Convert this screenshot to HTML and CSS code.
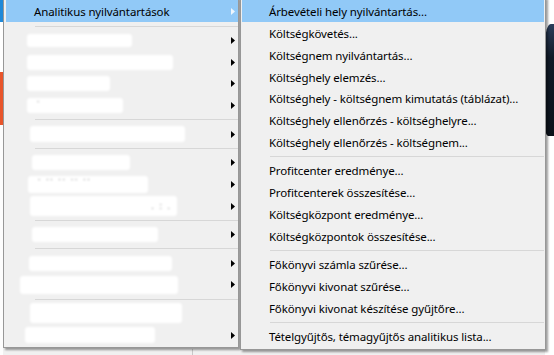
FILE: index.html
```html
<!DOCTYPE html>
<html lang="hu">
<head>
<meta charset="utf-8">
<title>Menü</title>
<link rel="stylesheet" href="styles.css">
</head>
<body>
<div class="desktop">
  <div class="edge-left">
    <div class="blue"></div>
    <div class="gap"></div>
    <div class="orange"></div>
    <div class="rest"></div>
  </div>
  <div class="center">
    <div class="bottom-strip"><span class="vline"></span></div>
  </div>
  <div class="edge-right">
    <div class="top"></div>
    <div class="logo"></div>
    <div class="rest"></div>
  </div>
</div>

<div class="menu menu-main">
  <div class="item active"><span class="label">Analitikus nyilvántartások</span><svg class="arrow" width="4" height="7" viewBox="0 0 4 7"><path d="M0 0L4 3.5L0 7z"/></svg></div>
  <div class="sep"></div>
  <div class="item"><span class="patch p1"></span><svg class="arrow" width="4" height="7" viewBox="0 0 4 7"><path d="M0 0L4 3.5L0 7z"/></svg></div>
  <div class="item"><span class="patch p2"></span><svg class="arrow" width="4" height="7" viewBox="0 0 4 7"><path d="M0 0L4 3.5L0 7z"/></svg></div>
  <div class="item"><span class="patch p3"></span><svg class="arrow" width="4" height="7" viewBox="0 0 4 7"><path d="M0 0L4 3.5L0 7z"/></svg></div>
  <div class="item"><span class="patch p4"><span class="frag">·</span></span><svg class="arrow" width="4" height="7" viewBox="0 0 4 7"><path d="M0 0L4 3.5L0 7z"/></svg></div>
  <div class="sep"></div>
  <div class="item"><span class="patch p5"></span><svg class="arrow" width="4" height="7" viewBox="0 0 4 7"><path d="M0 0L4 3.5L0 7z"/></svg></div>
  <div class="sep"></div>
  <div class="item"><span class="patch p6"></span><svg class="arrow" width="4" height="7" viewBox="0 0 4 7"><path d="M0 0L4 3.5L0 7z"/></svg></div>
  <div class="item"><span class="patch p7"><span class="frag">· ·· ·· ·· ··</span></span><svg class="arrow" width="4" height="7" viewBox="0 0 4 7"><path d="M0 0L4 3.5L0 7z"/></svg></div>
  <div class="item"><span class="patch p8"><span class="frag frag-right">. : .</span></span><svg class="arrow" width="4" height="7" viewBox="0 0 4 7"><path d="M0 0L4 3.5L0 7z"/></svg></div>
  <div class="sep"></div>
  <div class="item"><span class="patch p9"></span><svg class="arrow" width="4" height="7" viewBox="0 0 4 7"><path d="M0 0L4 3.5L0 7z"/></svg></div>
  <div class="sep"></div>
  <div class="item"><span class="patch p10"></span><svg class="arrow" width="4" height="7" viewBox="0 0 4 7"><path d="M0 0L4 3.5L0 7z"/></svg></div>
  <div class="item"><span class="patch p11"></span><svg class="arrow" width="4" height="7" viewBox="0 0 4 7"><path d="M0 0L4 3.5L0 7z"/></svg></div>
  <div class="sep"></div>
  <div class="item"><span class="patch p12"></span></div>
  <div class="item"><span class="patch p13"></span><svg class="arrow" width="4" height="7" viewBox="0 0 4 7"><path d="M0 0L4 3.5L0 7z"/></svg></div>
</div>

<div class="menu menu-sub">
  <div class="item active">Árbevételi hely nyilvántartás...</div>
  <div class="item">Költségkövetés...</div>
  <div class="item">Költségnem nyilvántartás...</div>
  <div class="item">Költséghely elemzés...</div>
  <div class="item">Költséghely - költségnem kimutatás (táblázat)...</div>
  <div class="item">Költséghely ellenőrzés - költséghelyre...</div>
  <div class="item">Költséghely ellenőrzés - költségnem...</div>
  <div class="sep"></div>
  <div class="item">Profitcenter eredménye...</div>
  <div class="item">Profitcenterek összesítése...</div>
  <div class="item">Költségközpont eredménye...</div>
  <div class="item">Költségközpontok összesítése...</div>
  <div class="sep"></div>
  <div class="item">Főkönyvi számla szűrése...</div>
  <div class="item">Főkönyvi kivonat szűrése...</div>
  <div class="item">Főkönyvi kivonat készítése gyűjtőre...</div>
  <div class="sep"></div>
  <div class="item">Tételgyűjtős, témagyűjtős analitikus lista...</div>
</div>
</body>
</html>
```

FILE: styles.css
```css
html, body {
  margin: 0;
  width: 554px;
  height: 355px;
  overflow: hidden;
}

body {
  position: relative;
  background: #f1f1f1;
  font-family: "Noto Sans", "Open Sans", sans-serif;
  font-size: 11.5px;
  letter-spacing: -0.12px;
  color: #000;
}

/* underlying application, mostly hidden */
.desktop {
  display: flex;
  height: 355px;
}

.edge-left {
  width: 3px;
  flex: none;
  display: flex;
  flex-direction: column;
}
.edge-left .blue { height: 22px; background: #2089d8; }
.edge-left .gap { height: 50px; background: #ffffff; }
.edge-left .orange { height: 53px; background: #e8552b; }
.edge-left .rest { flex: 1; background: #fdfdfd; }

.center {
  flex: 1;
  display: flex;
  flex-direction: column;
  justify-content: flex-end;
}
.bottom-strip {
  height: 6px;
  background: #f0f0f0;
  display: flex;
  padding-left: 189px;
}
.vline {
  width: 1px;
  background: #c8c8c8;
}

.edge-right {
  width: 9px;
  flex: none;
  display: flex;
  flex-direction: column;
  background: #ffffff;
}
.edge-right .top { height: 24px; flex: none; }
.edge-right .logo {
  height: 112px;
  flex: none;
  background: linear-gradient(180deg, #2b3d5a 0%, #101a28 30%, #0b1119 100%);
  border-top-left-radius: 6px 18px;
  border-bottom-left-radius: 3px 10px;
}
.edge-right .rest { flex: 1; }

/* popup menus */
.menu {
  position: absolute;
  top: -3px;
  background: #f0f0f0;
  border: 1px solid #979797;
  box-shadow: 2px 2px 2px rgba(0, 0, 0, 0.38);
}

.menu-main {
  left: 3px;
  width: 232px;
  padding: 2px 0 2px 2px;
}

.menu-sub {
  left: 240px;
  width: 302px;
  padding: 2px 1px;
}

.item {
  box-sizing: border-box;
  height: 21.75px;
  display: flex;
  align-items: center;
  white-space: nowrap;
  padding-top: 2px;
}

.menu-main .item {
  padding-left: 28px;
  padding-right: 3px;
}

.menu-sub .item {
  padding-left: 27px;
}

.item.active {
  background: #91c9f7;
}

.arrow {
  margin-left: auto;
  fill: #000;
  flex: none;
}
.item.active .arrow {
  fill: #eef6fd;
}

.sep {
  height: 1px;
  background: #d7d7d7;
  margin: 3.75px 0 2px 0;
}
.menu-main .sep { margin-left: 29px; }
.menu-sub .sep { margin-left: 28px; }

/* redacted entries of the main menu */
.patch {
  position: relative;
  display: block;
  background: #ffffff;
  border-radius: 3px;
  filter: blur(1px);
  flex: none;
}
.frag {
  position: absolute;
  left: 10px;
  top: 0;
  font-size: 8px;
  line-height: 8px;
  color: #777;
  letter-spacing: 2px;
}
.frag-right {
  left: auto;
  right: 5px;
  top: 6px;
}
.p1 { margin-left: -7px; width: 105px; height: 13px; }
.p2 { margin-left: -7px; width: 146px; height: 15px; }
.p3 { margin-left: -7px; width: 83px; height: 15px; }
.p4 { margin-left: -7px; width: 96px; height: 15px; }
.p5 { margin-left: -4px; width: 155px; height: 16px; }
.p6 { margin-left: -2px; width: 98px; height: 15px; }
.p7 { margin-left: -6px; width: 120px; height: 17px; }
.p8 { margin-left: -4px; width: 147px; height: 20px; }
.p9 { margin-left: -2px; width: 126px; height: 15px; }
.p10 { margin-left: -5px; width: 143px; height: 15px; }
.p11 { margin-left: -14px; width: 158px; height: 18px; }
.p12 { margin-left: -4px; width: 152px; height: 20px; }
.p13 { margin-left: -9px; width: 130px; height: 16px; }
```
